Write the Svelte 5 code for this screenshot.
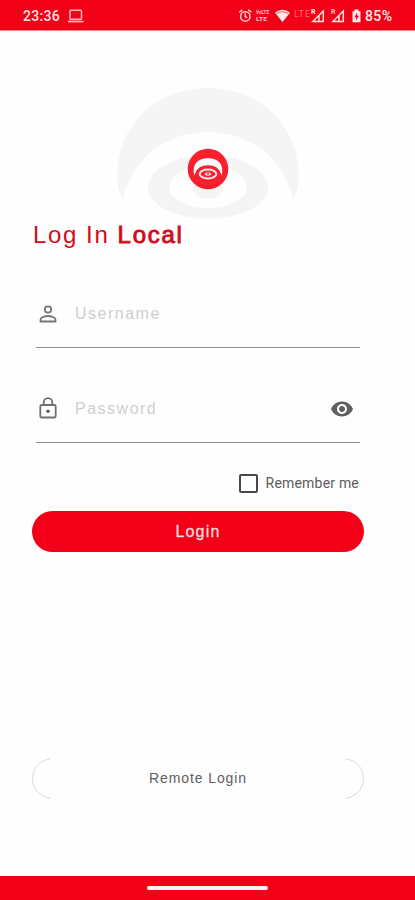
<script>
    let username = '';
    let password = '';
    let remember = false;
    let showPassword = false;

    const toggleRemember = () => {
        remember = !remember;
    }
</script>

<style>
    :global(body) {
        background-color: #ffffff;
        font-family: "Liberation Sans", Arial, sans-serif;
    }

    .screen {
        display: flex;
        flex-direction: column;
        width: 415px;
        height: 900px;
        overflow: hidden;
        background-color: #fefefe;
    }

    .status-bar {
        display: flex;
        justify-content: space-between;
        flex: none;
        height: 30px;
        border-bottom: 1px solid #ff8a90;
        background-color: #f20017;
        color: #ffe3e3;
        font-family: Roboto, sans-serif;
    }

    .status-left {
        display: flex;
        align-items: center;
        gap: 7px;
        padding: 2px 0 0 23px;
        font-size: 14px;
        font-weight: 500;
        letter-spacing: 0.3px;
    }

    .status-right {
        display: flex;
    }

    .content {
        display: flex;
        flex-direction: column;
        flex: 1;
        padding: 49px 51px 0 32px;
    }

    .logo {
        display: block;
        flex: none;
        margin-left: 73px;
    }

    h1 {
        margin: 0 0 0 1px;
        height: 28px;
        color: #d20a1b;
        font-size: 24px;
        font-weight: normal;
        line-height: 28px;
        letter-spacing: 1.6px;
        white-space: nowrap;
    }

    h1 b {
        font-weight: normal;
        letter-spacing: 1.7px;
        -webkit-text-stroke: 0.9px #d20a1b;
    }

    .field {
        display: flex;
        align-items: center;
        box-sizing: border-box;
        height: 70px;
        margin: 29px 4px 0 4px;
        padding-top: 2px;
        border-bottom: 1px solid #8f8f8f;
    }

    .field + .field {
        margin-top: 25px;
    }

    .field svg {
        flex: none;
    }

    .field input {
        flex: 1;
        min-width: 0;
        margin-left: 15px;
        padding: 0;
        border: none;
        outline: none;
        background: none;
        color: #444444;
        font-family: inherit;
        font-size: 16px;
        letter-spacing: 1.5px;
    }

    .field input::placeholder {
        color: #cfcfcf;
        opacity: 1;
    }

    button {
        padding: 0;
        border: none;
        background: none;
        cursor: pointer;
        font-family: inherit;
    }

    .eye {
        display: flex;
        margin-right: 6px;
    }

    .remember {
        display: flex;
        align-items: center;
        justify-content: flex-end;
        gap: 8px;
        height: 20px;
        margin: 30px 5px 0 0;
        color: #5c5c5c;
        font-family: Roboto, sans-serif;
        font-size: 14px;
        letter-spacing: 0.2px;
    }

    .box {
        display: flex;
        box-sizing: border-box;
        width: 19px;
        height: 19px;
        border: 2px solid #484848;
        border-radius: 2px;
    }

    .login {
        flex: none;
        height: 41px;
        margin-top: 18px;
        border-radius: 21px;
        background-color: #f20017;
        color: #ffdcdf;
        font-size: 16px;
        letter-spacing: 1.2px;
        -webkit-text-stroke: 0.3px #ffdcdf;
    }

    .remote {
        display: flex;
        align-items: center;
        justify-content: space-between;
        height: 41px;
        margin-top: 206px;
        color: #606060;
        font-size: 14px;
        letter-spacing: 0.9px;
    }

    .remote span {
        padding-bottom: 1px;
    }

    .nav-bar {
        display: flex;
        justify-content: center;
        flex: none;
        height: 24px;
        background-color: #f20017;
    }

    .handle {
        width: 121px;
        height: 4px;
        margin-top: 10px;
        border-radius: 2px;
        background-color: #fff4f4;
    }
</style>

<div class="screen">
    <div class="status-bar">
        <div class="status-left">
            <span>23:36</span>
            <svg width="17" height="14" viewBox="0 0 17 14" fill="none" stroke="#ffb9bd" stroke-width="1.5">
                <rect x="3" y="1.2" width="11.5" height="9" rx="0.8" />
                <path d="M1 12.5h15.5" stroke-width="1.8" />
            </svg>
        </div>
        <svg class="status-right" width="180" height="30" viewBox="235 0 180 30" fill="#ffe9e9">
            <g fill="none" stroke="#ffdada" stroke-width="1.4">
                <circle cx="245.3" cy="16.4" r="4.7" />
                <path d="M245.3 13.5v3.2l2 1.2M239.3 12.3l3-2.4M251.3 12.3l-3-2.4" />
            </g>
            <g fill="#ffc4c7" font-size="5" font-weight="700">
                <text x="256" y="14" textLength="13" lengthAdjust="spacingAndGlyphs">VoLTE</text>
                <text x="256" y="21" textLength="11" lengthAdjust="spacingAndGlyphs">LTE</text>
            </g>
            <path d="M275 12.7q7.5-6 15 0L282.5 22z" />
            <path d="M276.8 13.5q5.7-3.5 11.4 0" fill="none" stroke="#f20017" stroke-width="0.7" />
            <text x="294" y="17" font-size="9" fill="#ff6972" textLength="16">LTE</text>
            <g fill="none" stroke="#ffe0e0" stroke-width="1.5">
                <path d="M323.3 11v10.4h-10.4zM319 16v5" />
                <path d="M343.3 11v10.4h-10.4zM339 16v5" />
            </g>
            <text x="311" y="14" font-size="7" font-weight="700">R</text>
            <text x="331" y="14" font-size="7" font-weight="700" fill="#ffbcbf">R</text>
            <path d="M354.5 9.5h4v1.7h2v11h-8v-11h2z" />
            <path d="M357.2 12.5l-2.8 4.8h1.8v3.5l2.7-5h-1.7z" fill="#f20017" />
            <text x="365" y="21" font-size="14" font-weight="500" textLength="27">85%</text>
        </svg>
    </div>

    <div class="content">
        <svg class="logo" width="205" height="141" viewBox="105 80 205 141">
            <g fill="#f5f5f5">
                <path d="M123 199C116 188 116 173 119 158C127 115 164 88 208 88C252 88 289 115 297 158C300 173 300 188 293 199C284 157 248 132 208 132C168 132 132 157 123 199z" />
                <path fill-rule="evenodd" d="M148 187a60 32 0 1 0 120 0a60 32 0 1 0-120 0zM169 187a39 21 0 1 0 78 0a39 21 0 1 0-78 0z" />
                <ellipse cx="208" cy="189" rx="15" ry="10" />
            </g>
            <circle cx="208" cy="169" r="20.3" fill="#fb1f2e" />
            <path d="M194.3 175.5C191.5 164 198 158.3 208 158.3C218 158.3 224.5 164 221.7 175.5C219.5 168 214.5 165.2 208 165.2C201.5 165.2 196.5 168 194.3 175.5z" fill="#fff" />
            <ellipse cx="208" cy="174" rx="8.3" ry="4.5" fill="none" stroke="#ffeded" stroke-width="1.9" />
            <ellipse cx="208" cy="174" rx="3.3" ry="1.7" fill="#ffd6d8" />
            <path d="M206.5 173.2h3l-1.5 1.8z" fill="#e51b2b" />
        </svg>

        <h1>Log In <b>Local</b></h1>

        <div class="field">
            <svg width="24" height="24" viewBox="0 0 24 24" fill="none" stroke="#757575" stroke-width="1.8">
                <circle cx="12" cy="7.5" r="3.2" />
                <path d="M4.5 19.5v-1.7c0-2.5 4.3-3.8 7.5-3.8s7.5 1.3 7.5 3.8v1.7z" stroke-linejoin="round" />
            </svg>
            <input type="text" placeholder="Username" bind:value={username} />
        </div>

        <div class="field">
            <svg width="24" height="24" viewBox="0 0 24 24" fill="none" stroke="#707070" stroke-width="1.8">
                <rect x="4.3" y="8" width="15.4" height="12.5" rx="1.5" />
                <path d="M7.7 8V5.500a4.3 4.3 0 0 1 8.6 0V8" />
                <circle cx="12" cy="14.2" r="1.8" fill="#606060" stroke="none" />
            </svg>
            <input type={showPassword ? 'text' : 'password'} placeholder="Password" bind:value={password} />
            <button class="eye" aria-label="Show password" on:click={() => showPassword = !showPassword}>
                <svg width="24" height="24" viewBox="0 0 24 24" fill="#606060">
                    <path d="M12 4.5C7 4.5 2.73 7.61 1 12c1.73 4.39 6 7.5 11 7.5s9.27-3.11 11-7.5c-1.73-4.39-6-7.5-11-7.5zM12 17c-2.76 0-5-2.24-5-5s2.24-5 5-5 5 2.24 5 5-2.24 5-5 5zm0-8c-1.66 0-3 1.34-3 3s1.34 3 3 3 3-1.34 3-3-1.34-3-3-3z" />
                </svg>
            </button>
        </div>

        <div class="remember">
            <button class="box" role="checkbox" aria-checked={remember} aria-label="Remember me" on:click={toggleRemember}>
                {#if remember}
                    <svg width="15" height="15" viewBox="0 0 15 15" fill="none" stroke="#f20017" stroke-width="2">
                        <path d="M3 8l3 3 6-7" />
                    </svg>
                {/if}
            </button>
            <span>Remember me</span>
        </div>

        <button class="login">Login</button>

        <button class="remote">
            <svg width="20" height="41" viewBox="0 0 20 41" fill="none" stroke="#dadada">
                <path d="M18.5 0.8C8 2 0.5 10 0.5 20.5S8 39 18.5 40.2" />
            </svg>
            <span>Remote Login</span>
            <svg width="20" height="41" viewBox="0 0 20 41" fill="none" stroke="#dadada">
                <path d="M1.5 0.8C12 2 19.5 10 19.5 20.5S12 39 1.5 40.2" />
            </svg>
        </button>
    </div>

    <div class="nav-bar">
        <div class="handle"></div>
    </div>
</div>
